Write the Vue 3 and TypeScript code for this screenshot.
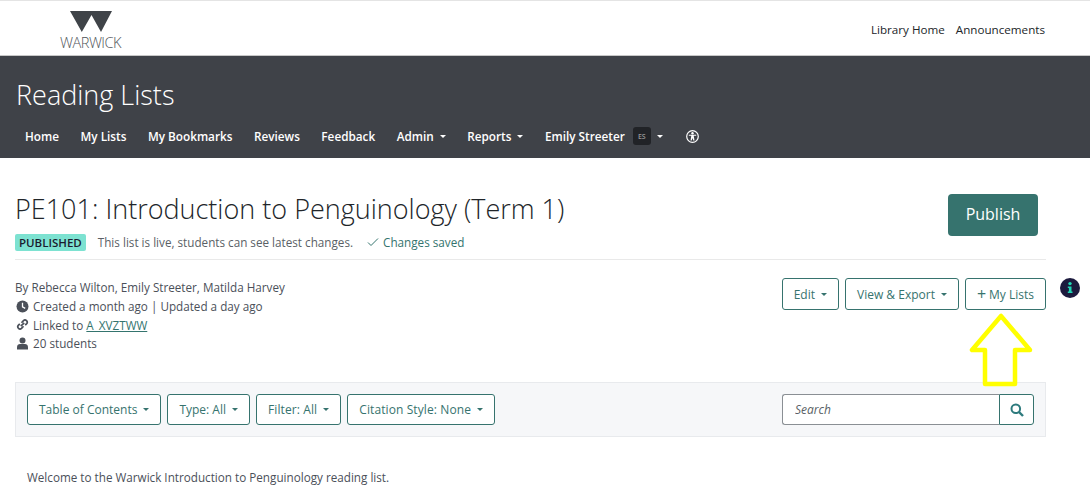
<script setup lang="ts">
const navItems: { label: string; caret?: boolean }[] = [
  { label: 'Home' },
  { label: 'My Lists' },
  { label: 'My Bookmarks' },
  { label: 'Reviews' },
  { label: 'Feedback' },
  { label: 'Admin', caret: true },
  { label: 'Reports', caret: true },
]
const filters = ['Table of Contents', 'Type: All', 'Filter: All', 'Citation Style: None']
</script>

<template>
  <div class="page">
    <header class="top">
      <div class="logo">
        <svg class="logo-mark" width="42" height="21" viewBox="0 0 42 21">
          <path d="M0 0H42L31 21L21.500 4L11.800 21Z" fill="#3f4348" />
        </svg>
        <span class="logo-text">WARWICK</span>
      </div>
      <div class="top-links">
        <a>Library Home</a>
        <a>Announcements</a>
      </div>
    </header>

    <section class="band">
      <div class="band-title">Reading Lists</div>
      <nav class="nav">
        <a v-for="item in navItems" :key="item.label" class="nav-item">
          {{ item.label }}<i v-if="item.caret" class="caret nav-caret"></i>
        </a>
        <a class="nav-item user">
          Emily Streeter<span class="avatar">ES</span><i class="caret nav-caret user-caret"></i>
        </a>
        <a class="nav-item access" aria-label="Accessibility">
          <svg width="13" height="13" viewBox="0 0 13 13">
            <circle cx="6.500" cy="6.500" r="5.800" fill="none" stroke="#fff" stroke-width="1.200" />
            <circle cx="6.500" cy="3.300" r="1.200" fill="#fff" />
            <path d="M2.800 4.700H10.200V5.800H7.700L8.500 10.600H7.300L6.500 8L5.700 10.600H4.500L5.300 5.800H2.800Z" fill="#fff" />
          </svg>
        </a>
      </nav>
    </section>

    <main class="main">
      <div class="head">
        <div class="head-text">
          <h1>PE101: Introduction to Penguinology (Term 1)</h1>
          <div class="status">
            <span class="badge">PUBLISHED</span>
            <span class="live">This list is live, students can see latest changes.</span>
            <span class="saved">
              <svg width="12" height="10" viewBox="0 0 12 10"><path d="M1 5.500L4 8.500L11 1.500" fill="none" stroke="#34746e" stroke-width="1" /></svg>
              Changes saved
            </span>
          </div>
        </div>
        <button class="publish">Publish</button>
      </div>

      <div class="meta-row">
        <div class="meta">
          <div class="by">By Rebecca Wilton, Emily Streeter, Matilda Harvey</div>
          <div class="line">
            <svg class="ic" width="13" height="13" viewBox="0 0 13 13">
              <circle cx="6.500" cy="6.500" r="6" fill="#4b5059" />
              <path d="M6.500 2.800V6.800L9.200 8.400" fill="none" stroke="#fff" stroke-width="1.300" />
            </svg>
            <span>Created a month ago | Updated a day ago</span>
          </div>
          <div class="line">
            <svg class="ic" width="13" height="13" viewBox="0 0 13 13">
              <g fill="none" stroke="#4b5059" stroke-width="1.700">
                <path d="M5.500 4.800L7.500 2.600A2.200 2.200 0 0 1 10.700 5.600L9.200 7.200" />
                <path d="M7.500 8.200L5.500 10.400A2.200 2.200 0 0 1 2.300 7.400L3.800 5.800" />
                <path d="M4.800 8.200L8.200 4.800" />
              </g>
            </svg>
            <span>Linked to <a class="link">A_XVZTWW</a></span>
          </div>
          <div class="line">
            <svg class="ic" width="13" height="13" viewBox="0 0 13 13">
              <circle cx="6.500" cy="3.500" r="3" fill="#4b5059" />
              <path d="M1 12.500V10.200C1 8.200 2.500 7 4 7H9C10.500 7 12 8.200 12 10.200V12.500Z" fill="#4b5059" />
            </svg>
            <span>20 students</span>
          </div>
        </div>
        <div class="actions">
          <button class="btn">Edit<i class="caret"></i></button>
          <button class="btn">View &amp; Export<i class="caret"></i></button>
          <button class="btn"><span class="plus">+</span>My Lists</button>
          <span class="info" aria-label="Information">
            <svg width="20" height="20" viewBox="0 0 20 20">
              <circle cx="10" cy="10" r="10" fill="#1c1a3d" />
              <circle cx="10" cy="5.600" r="1.700" fill="#1fd6b4" />
              <path d="M7.800 8.500H11.500V13.400H12.500V15H7.800V13.400H8.900V10.100H7.800Z" fill="#1fd6b4" />
            </svg>
          </span>
          <svg class="arrow" width="64" height="76" viewBox="0 0 64 76">
            <path d="M32 4L3 38H16V72H46V38H61Z" fill="none" stroke="#ffff00" stroke-width="4.500" stroke-linejoin="round" />
          </svg>
        </div>
      </div>

      <div class="toolbar">
        <div class="filters">
          <button v-for="f in filters" :key="f" class="btn short">{{ f }}<i class="caret"></i></button>
        </div>
        <div class="search">
          <input class="search-input" placeholder="Search" />
          <button class="search-btn" aria-label="Search">
            <svg width="14" height="14" viewBox="0 0 14 14">
              <circle cx="5.800" cy="5.800" r="4.300" fill="none" stroke="#2d7a7d" stroke-width="2" />
              <path d="M9 9L13 13" stroke="#2d7a7d" stroke-width="2.400" />
            </svg>
          </button>
        </div>
      </div>

      <p class="welcome">Welcome to the Warwick Introduction to Penguinology reading list.</p>
    </main>
  </div>
</template>

<style>
html, body { margin: 0; background: #fff; overflow: hidden; }
</style>

<style scoped>
.page {
  width: 1090px;
  height: 494px;
  overflow: hidden;
  font-family: "Open Sans", sans-serif;
  font-size: 11.700px;
  color: #4b5059;
}
.top {
  height: 54px;
  border-top: 1px solid #e4e4e4;
  border-bottom: 1px solid #c8c8c8;
  display: flex;
  justify-content: space-between;
  align-items: flex-start;
  padding: 0 45px 0 60px;
  box-sizing: content-box;
}
.logo { display: flex; flex-direction: column; align-items: center; width: 61px; }
.logo-mark { display: block; margin-top: 10px; }
.logo-text { font-size: 14.600px; font-weight: 300; line-height: 14px; margin-top: 3px; color: #505459; letter-spacing: -0.550px; white-space: nowrap; }
.top-links { display: flex; gap: 11px; font-size: 11.650px; color: #212529; margin-top: 20px; line-height: 18px; }
.band { height: 102px; background: #3f4248; color: #fff; padding: 0 16px; box-sizing: border-box; }
.band-title { font-size: 27px; font-weight: 300; line-height: 37px; padding-top: 20px; }
.nav { display: flex; align-items: center; margin-top: 11px; height: 24px; margin-left: 9px; }
.nav-item {
  font-size: 11.750px;
  font-weight: 600;
  color: #fff;
  margin-right: 21.500px;
  display: flex;
  align-items: center;
  white-space: nowrap;
}
.caret {
  display: inline-block;
  width: 0;
  height: 0;
  border-left: 3px solid transparent;
  border-right: 3px solid transparent;
  border-top: 3px solid currentColor;
  margin-left: 6px;
}
.nav-caret { margin-left: 6px; border-left-width: 3.500px; border-right-width: 3.500px; }
.avatar {
  width: 18px;
  height: 18px;
  background: #212327;
  color: #999;
  font-size: 7px;
  border-radius: 3px;
  margin-left: 8px;
  display: flex;
  align-items: center;
  justify-content: center;
}
.access { display: flex; margin-right: 0; margin-left: 1.500px; }
.user-caret { margin-left: 6px; }
.main { padding: 0 44px 0 15px; }
.head { display: flex; justify-content: space-between; align-items: flex-start; padding-top: 35px; height: 102px; box-sizing: border-box; border-bottom: 1px solid #e9e9e9; }
h1 { margin: 0; font-size: 27px; font-weight: 300; line-height: 32px; color: #212529; }
.status { display: flex; align-items: center; margin-top: 8px; height: 18px; }
.badge {
  background: #7de2d1;
  color: #1b1b2f;
  font-size: 11.500px;
  font-weight: 600;
  border-radius: 2px;
  padding: 0 4px;
  line-height: 17px;
}
.live { margin-left: 12px; color: #5a5f66; }
.saved { margin-left: 14px; color: #34746e; display: flex; align-items: center; gap: 4px; }
.publish {
  width: 90px;
  height: 42px;
  background: #36736e;
  color: #fff;
  border: 0;
  border-radius: 4px;
  font: 400 16px "Open Sans", sans-serif;
  margin: 1px 8px 0 0;
  padding: 0 0 2px;
}
.meta-row { display: flex; justify-content: space-between; height: 122px; padding-top: 18px; box-sizing: border-box; }
.meta { line-height: 18.800px; }
.line { display: flex; align-items: center; height: 18.800px; }
.ic { margin-left: 1px; margin-right: 4px; flex: none; }
.link { color: #34746e; text-decoration: underline; }
.actions { display: flex; gap: 6px; align-items: flex-start; position: relative; }
.btn {
  height: 32px;
  padding: 0 11px;
  background: #fff;
  border: 1px solid #36736e;
  border-radius: 3px;
  color: #36736e;
  font: 400 12px "Open Sans", sans-serif;
  display: inline-flex;
  align-items: center;
  white-space: nowrap;
}
.short { height: 31px; }
.short:nth-child(3), .short:nth-child(4) { letter-spacing: 0.100px; }
.plus { font-size: 16px; line-height: 12px; margin-right: 3px; }
.info { position: absolute; left: 100%; top: 0; margin-left: 14px; display: flex; }
.arrow { position: absolute; right: 13px; top: 34px; z-index: 2; }
.toolbar {
  height: 55px;
  background: #f6f7f9;
  border: 1px solid #e8eaed;
  display: flex;
  align-items: center;
  justify-content: space-between;
  padding: 0 11px;
  box-sizing: border-box;
  width: 1031px;
}
.filters { display: flex; gap: 6px; }
.search { display: flex; width: 252px; height: 31px; }
.search-input {
  flex: 1;
  min-width: 0;
  box-sizing: border-box;
  border: 1px solid #8a8f94;
  border-right: 0;
  border-radius: 3px 0 0 3px;
  padding: 0 12px;
  font: italic 400 12px "Open Sans", sans-serif;
  background: #fff;
  outline: 0;
}
.search-input::placeholder { color: #5a5f66; opacity: 1; }
.search-btn {
  width: 35px;
  background: #fff;
  border: 1px solid #36736e;
  border-radius: 0 3px 3px 0;
  display: flex;
  align-items: center;
  justify-content: center;
  padding: 0;
}
.welcome { margin: 31px 0 0 12px; line-height: 18px; }
</style>
